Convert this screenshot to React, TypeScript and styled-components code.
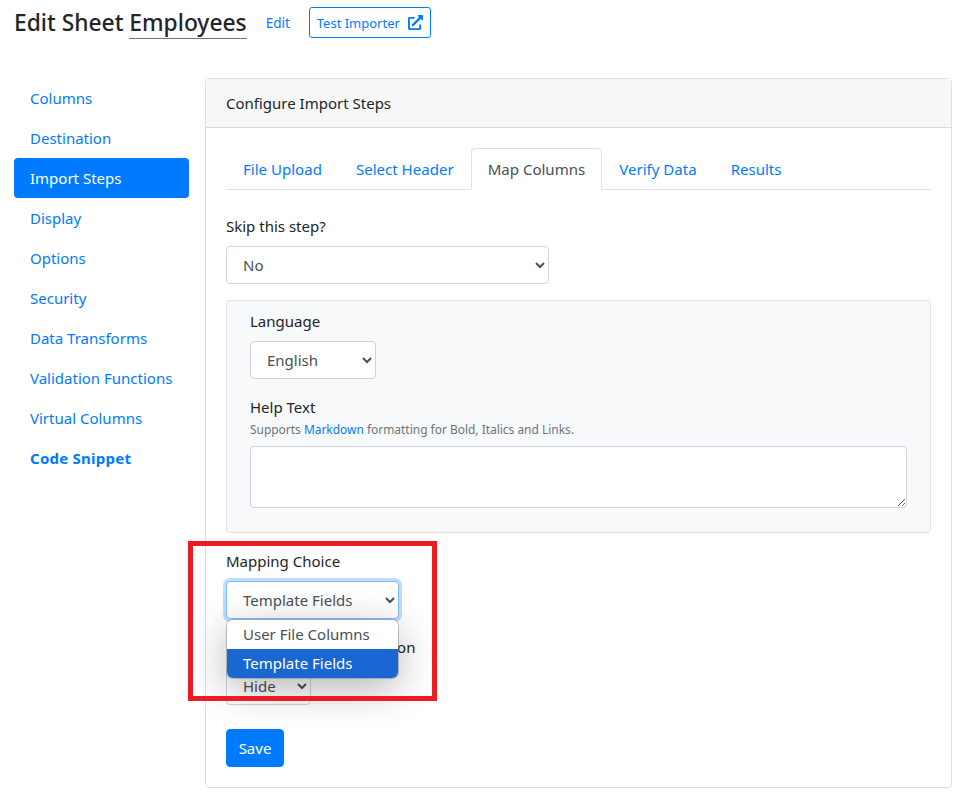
import styled, { createGlobalStyle } from 'styled-components';
import { FaExternalLinkAlt } from 'react-icons/fa';

const GlobalStyle = createGlobalStyle`
  * {
    box-sizing: border-box;
  }
  html,
  body {
    margin: 0;
    background: #fff;
  }
  body {
    font-family: 'Noto Sans', sans-serif;
    font-size: 15px;
    line-height: 24px;
    color: #212529;
  }
`;

const Page = styled.div`
  position: relative;
  width: 960px;
  height: 798px;
  padding: 7px 8px 10px 14px;
  overflow: hidden;
`;

const Header = styled.header`
  display: flex;
  align-items: center;
  height: 31px;
  margin-bottom: 40px;
`;

const Title = styled.h1`
  margin: 0 19px 0 0;
  font-size: 22.8px;
  font-weight: 500;
  line-height: 28px;
`;

const SheetName = styled.span`
  border-bottom: 1px solid #6c757d;
`;

const EditLink = styled.a`
  margin-right: 19px;
  font-size: 13.5px;
  color: #007bff;
`;

const TestButton = styled.button`
  display: flex;
  align-items: center;
  justify-content: center;
  gap: 8px;
  width: 122px;
  height: 31px;
  padding: 0;
  font-family: inherit;
  font-size: 13px;
  color: #007bff;
  background: #fff;
  border: 1px solid #007bff;
  border-radius: 3px;
`;

const Columns = styled.div`
  display: flex;
  gap: 16px;
  align-items: flex-start;
`;

const Sidebar = styled.nav`
  display: flex;
  flex-direction: column;
  width: 175px;
`;

const NavItem = styled.a<{ $active?: boolean; $bold?: boolean }>`
  height: 40px;
  padding: 8px 16px;
  font-weight: ${(props) => (props.$bold ? 700 : 400)};
  letter-spacing: ${(props) => (props.$bold ? '0.25px' : '0')};
  color: ${(props) => (props.$active ? '#fff' : '#007bff')};
  background: ${(props) => (props.$active ? '#007bff' : 'transparent')};
  border-radius: 4px;
`;

const Card = styled.section`
  width: 747px;
  height: 710px;
  border: 1px solid rgba(0, 0, 0, 0.125);
  border-radius: 4px;
`;

const CardHeader = styled.div`
  height: 49px;
  padding: 12px 20px;
  background: #f7f7f7;
  border-bottom: 1px solid rgba(0, 0, 0, 0.125);
`;

const CardBody = styled.div`
  padding: 20px 20px 0;
`;

const Tabs = styled.div`
  display: flex;
  height: 42px;
  margin-bottom: 24px;
  border-bottom: 1px solid #dee2e6;
`;

const Tab = styled.a<{ $active?: boolean }>`
  height: 42px;
  padding: 8px 16px;
  font-size: 15.05px;
  color: ${(props) => (props.$active ? '#495057' : '#007bff')};
  background: ${(props) => (props.$active ? '#fff' : 'transparent')};
  border: 1px solid ${(props) => (props.$active ? '#dee2e6' : 'transparent')};
  border-bottom-color: ${(props) => (props.$active ? '#fff' : 'transparent')};
  border-radius: 4px 4px 0 0;
`;

const Label = styled.label`
  display: block;
  margin-bottom: 8px;
`;

const Field = styled.div`
  margin-bottom: 16px;
`;

const Select = styled.select<{ $width: number; $focused?: boolean }>`
  display: block;
  width: ${(props) => props.$width}px;
  height: 38px;
  padding: 6px 12px;
  font-family: inherit;
  font-size: 15px;
  color: #495057;
  background: #fff;
  border: 1px solid ${(props) => (props.$focused ? '#80bdff' : '#ced4da')};
  border-radius: 4px;
  box-shadow: ${(props) =>
    props.$focused ? '0 0 0 3px rgba(0, 123, 255, 0.25)' : 'none'};
`;

const LanguagePanel = styled.div`
  height: 233px;
  margin-bottom: 16px;
  padding: 8px 23px;
  background: #f8f9fa;
  border: 1px solid #dee2e6;
  border-radius: 4px;
`;

const HelpLabel = styled.label`
  display: block;
  margin-top: 1px;
`;

const HelpNote = styled.small`
  display: block;
  margin-top: 2px;
  margin-bottom: 7px;
  font-size: 11.95px;
  line-height: 18px;
  color: #6c757d;
`;

const NoteLink = styled.a`
  color: #007bff;
`;

const TextArea = styled.textarea`
  display: block;
  width: 657px;
  height: 62px;
  background: #fff;
  border: 1px solid #ced4da;
  border-radius: 4px;
`;

const SelectWrap = styled.div`
  position: relative;
`;

const OptionList = styled.ul`
  position: absolute;
  top: 39px;
  left: 1px;
  z-index: 2;
  width: 171px;
  margin: 0;
  padding: 0;
  overflow: hidden;
  list-style: none;
  background: #fff;
  border-radius: 6px;
  box-shadow:
    0 0 0 1px rgba(120, 125, 130, 0.45),
    0 10px 40px rgba(0, 0, 0, 0.3);
`;

const Option = styled.li<{ $selected?: boolean }>`
  height: 29px;
  padding: 2px 16px;
  color: ${(props) => (props.$selected ? '#fff' : '#495057')};
  background: ${(props) => (props.$selected ? '#1a66d2' : '#fff')};
`;

const SaveButton = styled.button`
  display: block;
  width: 58px;
  height: 38px;
  margin-top: 24px;
  padding: 0;
  font-family: inherit;
  font-size: 15px;
  color: #fff;
  background: #007bff;
  border: 1px solid #007bff;
  border-radius: 4px;
`;

const Callout = styled.div`
  position: absolute;
  top: 541px;
  left: 188px;
  z-index: 3;
  width: 249px;
  height: 160px;
  border: 5px solid #ed1c24;
  pointer-events: none;
`;

const navItems = [
  'Columns',
  'Destination',
  'Import Steps',
  'Display',
  'Options',
  'Security',
  'Data Transforms',
  'Validation Functions',
  'Virtual Columns',
  'Code Snippet',
];

const tabs = ['File Upload', 'Select Header', 'Map Columns', 'Verify Data', 'Results'];

export default function App() {
  return (
    <Page>
      <GlobalStyle />
      <Header>
        <Title>
          Edit Sheet <SheetName>Employees</SheetName>
        </Title>
        <EditLink>Edit</EditLink>
        <TestButton>
          Test Importer
          <FaExternalLinkAlt size={15} />
        </TestButton>
      </Header>
      <Columns>
        <Sidebar>
          {navItems.map((item) => (
            <NavItem
              key={item}
              $active={item === 'Import Steps'}
              $bold={item === 'Code Snippet'}
            >
              {item}
            </NavItem>
          ))}
        </Sidebar>
        <Card>
          <CardHeader>Configure Import Steps</CardHeader>
          <CardBody>
            <Tabs>
              {tabs.map((tab) => (
                <Tab key={tab} $active={tab === 'Map Columns'}>
                  {tab}
                </Tab>
              ))}
            </Tabs>
            <Field>
              <Label>Skip this step?</Label>
              <Select $width={323} defaultValue="No">
                <option>No</option>
                <option>Yes</option>
              </Select>
            </Field>
            <LanguagePanel>
              <Field>
                <Label>Language</Label>
                <Select $width={126} defaultValue="English">
                  <option>English</option>
                </Select>
              </Field>
              <HelpLabel>Help Text</HelpLabel>
              <HelpNote>
                Supports <NoteLink>Markdown</NoteLink> formatting for Bold, Italics and Links.
              </HelpNote>
              <TextArea />
            </LanguagePanel>
            <Field>
              <Label>Mapping Choice</Label>
              <SelectWrap>
                <Select $width={173} $focused defaultValue="Template Fields">
                  <option>User File Columns</option>
                  <option>Template Fields</option>
                </Select>
                <OptionList>
                  <Option>User File Columns</Option>
                  <Option $selected>Template Fields</Option>
                </OptionList>
              </SelectWrap>
            </Field>
            <Field>
              <Label>Unmatched Column Action</Label>
              <Select $width={85} defaultValue="Hide">
                <option>Hide</option>
                <option>Show</option>
              </Select>
            </Field>
            <SaveButton>Save</SaveButton>
          </CardBody>
        </Card>
      </Columns>
      <Callout />
    </Page>
  );
}
